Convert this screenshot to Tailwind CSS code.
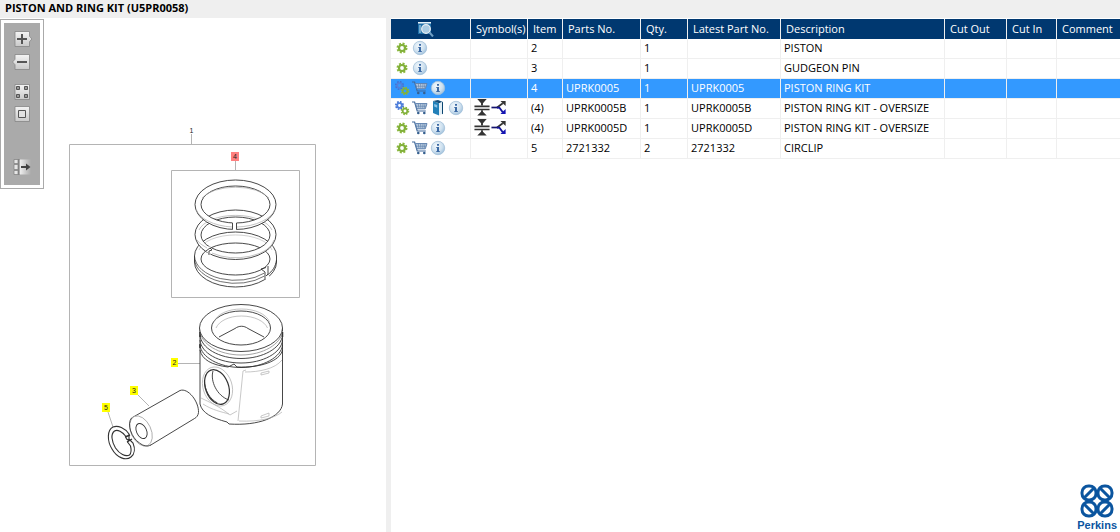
<!DOCTYPE html>
<html lang="en">
<head>
    <meta charset="UTF-8">
    <meta name="viewport" content="width=device-width, initial-scale=1.0">
    <title>Piston and Ring Kit</title>
    <script src="https://cdn.jsdelivr.net/npm/@tailwindcss/browser@4"></script>
</head>
<body class="bg-white text-black font-['Open_Sans','Noto_Sans',sans-serif] text-[11px] leading-4 flex flex-col h-screen overflow-hidden">

    <!-- Shared icons -->
    <svg class="absolute w-0 h-0" aria-hidden="true">
        <defs>
            <linearGradient id="metal" x1="0" y1="0" x2="0" y2="1">
                <stop offset="0" stop-color="#f4f4f4"/><stop offset="1" stop-color="#c9c9c9"/>
            </linearGradient>
            <linearGradient id="fade" x1="0" y1="0" x2="1" y2="0">
                <stop offset="0" stop-color="#f4f4f4"/><stop offset="1" stop-color="#aaaaaa"/>
            </linearGradient>
            <radialGradient id="glass" cx=".4" cy=".35" r=".7">
                <stop offset="0" stop-color="#f2f8fc"/><stop offset=".6" stop-color="#cfe1ef"/><stop offset="1" stop-color="#9dbfdb"/>
            </radialGradient>
            <symbol id="gear" viewBox="0 0 16 16">
                <circle cx="8" cy="8" r="4.5" fill="none" stroke="#8ab83c" stroke-width="2" stroke-dasharray="2 1.53"/>
                <circle cx="8" cy="8" r="3" fill="none" stroke="#82b03a" stroke-width="2.200"/>
            </symbol>
            <symbol id="gears" viewBox="0 0 16 16">
                <circle cx="5.500" cy="5.500" r="3.600" fill="none" stroke="#3f6fd0" stroke-width="1.800" stroke-dasharray="1.6 1.23"/>
                <circle cx="5.500" cy="5.500" r="2.300" fill="none" stroke="#4f80dd" stroke-width="1.800"/>
                <circle cx="11" cy="11" r="3.400" fill="none" stroke="#8ab83c" stroke-width="1.800" stroke-dasharray="1.5 1.17"/>
                <circle cx="11" cy="11" r="2.300" fill="none" stroke="#82b03a" stroke-width="1.700"/>
            </symbol>
            <symbol id="info" viewBox="0 0 16 16">
                <circle cx="8" cy="8" r="6.700" fill="url(#glass)" stroke="#a3c0d9" stroke-width=".8"/>
                <path d="M7 4h2v1.800H7zM6.300 7H9v4h.8v1H6.300v-1H7V8h-.7z" fill="#3c6aa5"/>
            </symbol>
            <symbol id="cart" viewBox="0 0 16 16">
                <path d="M0 2h2.600l2.600 9h8.600" fill="none" stroke="#426a9c" stroke-width="1.200"/>
                <path d="M3.400 3.600H15l-1.700 5.200H5z" fill="#c4d3e4" stroke="#5f82ae"/>
                <path d="M6.200 3.600l.8 5M8.600 3.600l.3 5M11 3.600l-.3 5M13 3.600l-.8 5M4 6.200h10" stroke="#5f82ae" stroke-width=".7"/>
                <circle cx="6.300" cy="13" r="1.300" fill="#36608f"/><circle cx="12.300" cy="13" r="1.300" fill="#36608f"/>
            </symbol>
            <symbol id="book" viewBox="0 0 16 16">
                <path d="M3 1l6 2.200v12.300L3 13z" fill="#2280b8"/>
                <path d="M3 1L8 0l5 2-4 1.200z" fill="#174f7a"/>
                <path d="M9 3.200L12.300 2v11.800L9 15.500z" fill="#e3eff6"/>
                <path d="M12 2l1 .2v11.500l-1 .6z" fill="#0b4570"/>
                <path d="M4.200 4l3 1.100v2.600l-3-1.100z" fill="#8cc4e8"/>
            </symbol>
            <symbol id="split" viewBox="0 0 16 18">
                <path d="M0 7h16v1.800H0zM0 10.200h16V12H0z" fill="#333"/>
                <path d="M3 0h10L9 4.500V7H7V4.500zM3 17.500h10L9 13.500V12H7v1.500z" fill="#333"/>
            </symbol>
            <symbol id="branch" viewBox="0 0 16 18">
                <path d="M0 9h7" stroke="#14146e" stroke-width="1.800"/>
                <path d="M6 9L12 4.500" fill="none" stroke="#333" stroke-width="1.800"/>
                <path d="M6 9l2.500.3L12 14" fill="none" stroke="#14149a" stroke-width="2"/>
                <path d="M9.500 2H15v5.500z" fill="#333"/><path d="M15 10.500V16H9.500z" fill="#1414b4"/>
            </symbol>
        </defs>
    </svg>

    <header class="bg-[#efefef] h-[18px] px-[5px] shrink-0">
        <h1 class="font-bold text-[11px] leading-4">PISTON AND RING KIT (U5PR0058)</h1>
    </header>

    <main class="flex flex-1 min-h-0">
        <!-- Illustration -->
        <section class="w-[386px] shrink-0 flex items-start">
            <div class="mt-px w-11 shrink-0 border border-[#aaaaaa] p-[3px]">
                <div class="bg-[#aaaaaa] h-[162px] pt-2 flex flex-col items-center">
                    <button aria-label="Zoom in" class="block h-4 w-5">
                        <svg viewBox="0 0 20 16" class="block w-5 h-4"><path d="M3 .5h14.500v4.800L20 8l-2.500 2.700v4.800H3z" fill="url(#metal)" stroke="#858585" stroke-width=".8"/><path d="M10 3v10M5 8h10" stroke="#555" stroke-width="2"/></svg>
                    </button>
                    <button aria-label="Zoom out" class="block h-4 w-5 mt-[7px]">
                        <svg viewBox="0 0 20 16" class="block w-5 h-4"><path d="M17.500 .5H3v4.800L.5 8 3 10.700v4.800h14.500z" fill="url(#metal)" stroke="#858585" stroke-width=".8"/><path d="M5 8h10" stroke="#555" stroke-width="2"/></svg>
                    </button>
                    <button aria-label="Fit page" class="block h-4 w-5 mt-3.5">
                        <svg viewBox="0 0 20 16" class="block w-5 h-4"><path d="M3 .5h14.500v15H3z" fill="url(#metal)" stroke="#858585" stroke-width=".8"/><path d="M4.500 2.500h3v3h-3zM12.500 2.500h3v3h-3zM4.500 10.500h3v3h-3zM12.500 10.500h3v3h-3z" fill="#999" stroke="#555"/></svg>
                    </button>
                    <button aria-label="Actual size" class="block h-4 w-5 mt-1.5">
                        <svg viewBox="0 0 20 16" class="block w-5 h-4"><path d="M3 .5h14.500v15H3z" fill="url(#metal)" stroke="#858585" stroke-width=".8"/><path d="M6.500 4.500h7v7h-7z" fill="#e2e2e2" stroke="#555"/></svg>
                    </button>
                    <button aria-label="Hide list" class="block h-4 w-5 mt-[37px]">
                        <svg viewBox="0 0 20 16" class="block w-5 h-4"><path d="M7 .5h12v15H7z" fill="url(#fade)"/><path d="M2 .5h4v4H2zM2 5.500h4v5H2zM2 11.500h4v4H2z" fill="#e6e6e6" stroke="#858585" stroke-width=".8"/><path d="M7 0v16" stroke="#666"/><path d="M9 8h6" stroke="#444" stroke-width="2"/><path d="M14 4.500L18.500 8 14 11.500z" fill="#444"/></svg>
                    </button>
                </div>
            </div>

            <svg viewBox="44 18 342 514" class="block w-[342px] h-[514px] font-['Liberation_Sans',sans-serif]" fill="none" stroke="#333" stroke-width=".9">
                <!-- Frames and leader lines -->
                <g stroke="#b4b4b4" stroke-width="1">
                    <path d="M69.500 144.500h246v321h-246zM191.500 134v10"/>
                    <path d="M171.500 170.500h128v127h-128zM235.500 161v9"/>
                    <path d="M178 363.500h22M137 394l12 12M108 412l5 15"/>
                </g>

                <!-- Ring kit, bottom ring first -->
                <g fill="#fff" fill-rule="evenodd">
                    <path d="M194.500 256a41 24 0 0 1 82 0v6a41 25 0 0 1-82 0zM201 259a34.500 16 0 0 0 69 0a34.500 16 0 0 0-69 0z"/>
                    <path d="M194.500 256a41 25 0 0 0 70 17M194.500 259a41 25 0 0 0 70 17" fill="none" stroke-width=".7"/>
                    <path d="M199 250a37 18 0 0 1 73 0" fill="none" stroke="#bbb" stroke-width=".7"/>
                    <path d="M264.500 272l4.500 4 8 14h-12z" stroke="none"/>
                    <path d="M261 269l4 3v8M261 269l5-1.500M268 266v8l-2 2M276.500 260c-1 7-4 11-9 15" fill="none"/>

                    <path d="M195 234.500a40.500 24.500 0 0 1 81 0a40.500 25 0 0 1-81 0zM201 235a34.500 18 0 0 0 69 0a34.500 18 0 0 0-69 0z"/>
                    <path d="M199 230a37.500 19 0 0 1 73 0M212 253a38 20 0 0 0 62-13M196 239a41 23 0 0 0 11 9" fill="none" stroke="#aaa" stroke-width=".7"/>
                    <path d="M206 251l3-5 3 3-2 6z" stroke="none"/>
                    <path d="M206 251l4-3 2 2-3 1v4" fill="none"/>

                    <path d="M195 204.500a40.500 24.500 0 0 1 81 0a40.500 25 0 0 1-81 0zM201 204.500a34.500 18.500 0 0 0 69 0a34.500 18.500 0 0 0-69 0z"/>
                    <path d="M202 198a36 17 0 0 1 67 0M196 209a41 22 0 0 0 36 18M275 209a41 22 0 0 1-38 18" fill="none" stroke="#aaa" stroke-width=".7"/>
                    <path d="M232.500 222h4v9h-4z" stroke="none"/>
                    <path d="M232.500 223v6.500M236.500 223v6.500" fill="none"/>
                </g>

                <!-- Piston -->
                <path d="M200 328v76c2 9 12 14 27 18l2 2c30 2 52-7 53.500-20v-76" fill="#fff"/>
                <ellipse cx="241" cy="328" rx="41.500" ry="23.500" fill="#fff"/>
                <ellipse cx="241" cy="328" rx="29.500" ry="17"/>
                <path d="M214 322c3-8 14-13 27.500-13s25 5 28 13M216 328c3-7 13-12 25.500-12s23 5 26 12" stroke="#aaa" stroke-width=".7"/>
                <path d="M219 337l16-8.500c4-3 9-3 13 0l16 8.500"/>
                <path d="M200 331c1 13 19 24 41 24s40.500-11 41.500-24" stroke="#999"/>
                <path d="M200 335c1 13 19 23.500 41 23.500S281.500 348 282.500 335M200 340c1 13 19 23 41 23S281.500 353 282.500 340M200 345c1 12 19 22.500 41 22.500S281.500 357 282.500 345"/>
                <path d="M200 350c2 10 12 15 28 17l6-3 3 3c24 1 43-6 45.500-17"/>
                <path d="M200 337v-5M200 348v-4M282.500 337v-5" stroke-width="1.500"/>
                <path d="M243 371l-5 50M245 372c14 0 30-3 37-12M243 371l3-1M239 421c20 1 36-3 43-9M201 398c8 4 18 8 29 17l7-4M203 404c9 6 19 8 26 10M261 373l8-2v2l-8 2zM261 416l8-3v3l-8 2z" stroke="#b0b0b0" stroke-width=".7"/>
                <ellipse cx="217.500" cy="386.500" rx="14.500" ry="20" stroke="#b0b0b0" stroke-width=".7" transform="rotate(-18 217.500 386.500)"/>
                <ellipse cx="217" cy="387" rx="11.500" ry="18" stroke-width="1.200" transform="rotate(-20 217 387)"/>
                <path d="M213 371c-3 10 4 25 16 29M204.500 380c0 10 5 19 13 23"/>

                <!-- Gudgeon pin -->
                <path d="M131.500 418L180 390.500c8-3 19 11 18.500 22-.3 3-2 5-4 6L150 445.500" fill="#fff"/>
                <ellipse cx="141" cy="431" rx="10" ry="16" fill="#fff" stroke="#999" stroke-width=".7" transform="rotate(-25 141 431)"/>
                <path d="M131.500 418c-5 6 0 20 8 25 4 3 8 4 11 2"/>
                <ellipse cx="141.500" cy="431" rx="5" ry="8" transform="rotate(-25 141.500 431)"/>

                <!-- Circlip -->
                <path d="M129 434c-4-6-11-9-16-7-6 3-6 14-1 22 5 9 14 12 19 8 4-3 4-9 2-14l-4-4-1.500 3 3 4c1 4 1 7-1 9-4 2-10-1-14-7-4-7-5-14-1-17 3-2 8 1 11 5l1 3 2.500 1z" stroke-width="1.100"/>
                <path d="M125 437l5-2M127 442l5-3" stroke-width="1.400"/>

                <!-- Callouts -->
                <g stroke="none">
                    <path d="M231 152h8v9h-8z" fill="#ff8080"/>
                    <path d="M171 358h7v9h-7zM130 386h8v9h-8zM102 403h8v9h-8z" fill="#ff0"/>
                    <g fill="#222" font-size="7" text-anchor="middle">
                        <text x="191.500" y="133">1</text>
                        <text x="235" y="159">4</text>
                        <text x="174.500" y="365">2</text>
                        <text x="134" y="393">3</text>
                        <text x="106" y="410">5</text>
                    </g>
                </g>
            </svg>
        </section>

        <!-- Parts list -->
        <section class="flex-1 min-w-0 flex flex-col border-l-[5px] border-[#efefef]">
            <table class="w-full table-fixed border-separate border-spacing-0 mt-px [&_th]:h-5 [&_th]:bg-[#003870] [&_th]:text-white [&_th]:font-normal [&_th]:text-left [&_th]:px-[5px] [&_th]:py-0 [&_th]:whitespace-nowrap [&_th]:border-r [&_th]:border-[#efefef] [&_td]:h-5 [&_td]:px-[3px] [&_td]:pt-0 [&_td]:pb-0.5 [&_td]:whitespace-nowrap [&_td]:border-r [&_td]:border-b [&_td]:border-[#efefef] [&_tr>*:last-child]:border-r-0 [&_svg]:block [&_button]:block">
                <colgroup>
                    <col class="w-20"><col class="w-[57px]"><col class="w-[35px]"><col class="w-[78px]"><col class="w-[47px]">
                    <col class="w-[93px]"><col class="w-[164px]"><col class="w-[62px]"><col class="w-[50px]"><col>
                </colgroup>
                <thead>
                    <tr>
                        <th>
                            <button aria-label="Search list" class="ml-[22px]">
                                <svg viewBox="0 0 16 16" class="w-4 h-4"><path d="M0 1h13v12H0z" fill="#1f6fa8"/><path d="M0 1h13v1.500H0z" fill="#e8f3fa"/><path d="M1 5h2M1 7h2M1 9h2M1 11h2" stroke="#bfe0f2"/><circle cx="8" cy="8" r="4.300" fill="#a9cbe3" stroke="#e8eef3" stroke-width="1.300"/><path d="M11.500 11.500l3.500 4" stroke="#6f9fc4" stroke-width="2"/></svg>
                            </button>
                        </th>
                        <th>Symbol(s)</th><th>Item</th><th>Parts No.</th><th>Qty.</th><th>Latest Part No.</th><th>Description</th><th>Cut Out</th><th>Cut In</th><th>Comment</th>
                    </tr>
                </thead>
                <tbody>
                    <tr>
                        <td><div class="flex gap-0.5">
                            <button aria-label="Part"><svg class="w-4 h-4"><use href="#gear"/></svg></button>
                            <button aria-label="Info"><svg class="w-4 h-4"><use href="#info"/></svg></button>
                        </div></td>
                        <td></td><td>2</td><td></td><td>1</td><td></td><td>PISTON</td><td></td><td></td><td></td>
                    </tr>
                    <tr>
                        <td><div class="flex gap-0.5">
                            <button aria-label="Part"><svg class="w-4 h-4"><use href="#gear"/></svg></button>
                            <button aria-label="Info"><svg class="w-4 h-4"><use href="#info"/></svg></button>
                        </div></td>
                        <td></td><td>3</td><td></td><td>1</td><td></td><td>GUDGEON PIN</td><td></td><td></td><td></td>
                    </tr>
                    <tr class="bg-[#3399ff] text-white">
                        <td><div class="flex gap-0.5">
                            <button aria-label="Kit"><svg class="w-4 h-4"><use href="#gears"/></svg></button>
                            <button aria-label="Add to cart"><svg class="w-4 h-4"><use href="#cart"/></svg></button>
                            <button aria-label="Info"><svg class="w-4 h-4"><use href="#info"/></svg></button>
                        </div></td>
                        <td></td><td>4</td><td>UPRK0005</td><td>1</td><td>UPRK0005</td><td>PISTON RING KIT</td><td></td><td></td><td></td>
                    </tr>
                    <tr>
                        <td><div class="flex gap-0.5">
                            <button aria-label="Kit"><svg class="w-4 h-4"><use href="#gears"/></svg></button>
                            <button aria-label="Add to cart"><svg class="w-4 h-4"><use href="#cart"/></svg></button>
                            <button aria-label="Notes"><svg class="w-4 h-4"><use href="#book"/></svg></button>
                            <button aria-label="Info"><svg class="w-4 h-4"><use href="#info"/></svg></button>
                        </div></td>
                        <td><div class="flex gap-px"><svg class="w-4 h-[17px]"><use href="#split"/></svg><svg class="w-4 h-[17px]"><use href="#branch"/></svg></div></td>
                        <td>(4)</td><td>UPRK0005B</td><td>1</td><td>UPRK0005B</td><td>PISTON RING KIT - OVERSIZE</td><td></td><td></td><td></td>
                    </tr>
                    <tr>
                        <td><div class="flex gap-0.5">
                            <button aria-label="Part"><svg class="w-4 h-4"><use href="#gear"/></svg></button>
                            <button aria-label="Add to cart"><svg class="w-4 h-4"><use href="#cart"/></svg></button>
                            <button aria-label="Info"><svg class="w-4 h-4"><use href="#info"/></svg></button>
                        </div></td>
                        <td><div class="flex gap-px"><svg class="w-4 h-[17px]"><use href="#split"/></svg><svg class="w-4 h-[17px]"><use href="#branch"/></svg></div></td>
                        <td>(4)</td><td>UPRK0005D</td><td>1</td><td>UPRK0005D</td><td>PISTON RING KIT - OVERSIZE</td><td></td><td></td><td></td>
                    </tr>
                    <tr>
                        <td><div class="flex gap-0.5">
                            <button aria-label="Part"><svg class="w-4 h-4"><use href="#gear"/></svg></button>
                            <button aria-label="Add to cart"><svg class="w-4 h-4"><use href="#cart"/></svg></button>
                            <button aria-label="Info"><svg class="w-4 h-4"><use href="#info"/></svg></button>
                        </div></td>
                        <td></td><td>5</td><td>2721332</td><td>2</td><td>2721332</td><td>CIRCLIP</td><td></td><td></td><td></td>
                    </tr>
                </tbody>
            </table>

            <div class="mt-auto ml-auto mr-[3px] flex flex-col items-center text-[#0b559f]">
                <svg viewBox="0 0 34 34" class="block w-[34px] h-[34px]" fill="none" stroke="currentColor" stroke-width="3">
                    <rect x="2" y="2" width="14" height="14" rx="6.500"/><rect x="18" y="2" width="14" height="14" rx="6.500"/>
                    <rect x="2" y="18" width="14" height="14" rx="6.500"/><rect x="18" y="18" width="14" height="14" rx="6.500"/>
                    <path d="M4 14L14 4M20 4l10 10M4 20l10 10M20 30l10-10"/>
                    <path d="M15 9h4M15 25h4M9 15v4M25 15v4"/>
                </svg>
                <span class="font-['Liberation_Sans',sans-serif] font-bold text-[11px] leading-[14px]">Perkins</span>
            </div>
        </section>
    </main>
</body>
</html>
